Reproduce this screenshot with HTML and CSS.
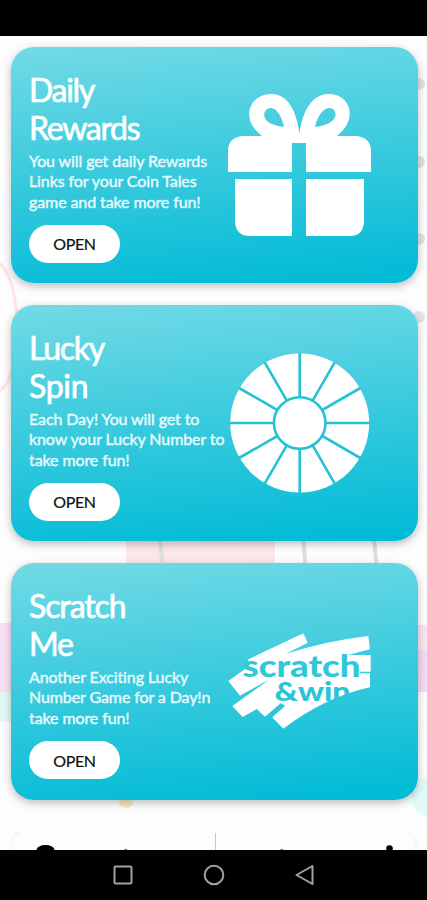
FILE: index.html
```html
<!DOCTYPE html>
<html lang="en">
<head>
<meta charset="utf-8">
<title>Coin Tales Rewards</title>
<link rel="stylesheet" href="styles.css">
</head>
<body>
<div class="status"></div>
<main class="screen">
  <svg class="backdrop" viewBox="0 36 427 814" aria-hidden="true">
    <path d="M0 263C23 286 23 374 0 391" fill="none" stroke="#fde4e7" stroke-width="3"/>
    <g fill="#e2e2e3"><circle cx="419" cy="84" r="6"/><circle cx="419" cy="162" r="6"/><circle cx="419" cy="239" r="6"/><circle cx="419" cy="317" r="6"/></g>
    <path d="M126 538H275V570H126Z" fill="#fce6e9"/>
    <path d="M160 538L163 570M303 538L306 570M374 538L377 570" stroke="#dedede" stroke-width="4"/>
    <path d="M0 623H20V692H0Z" fill="#f8dff5"/><path d="M0 692H15V722H0Z" fill="#e0f8f3"/>
    <path d="M412 625H427V650H412Z" fill="#fbe5f2"/><path d="M412 650H427V692H412Z" fill="#f5d9f5"/>
    <circle cx="431" cy="797" r="20" fill="#e0fbf8"/><ellipse cx="126" cy="803" rx="7" ry="5" fill="#f8edbf"/>
  </svg>
  <section class="card">
    <div class="copy">
      <h2><span class="t-rewards">Daily</span><span class="t-rewards">Rewards</span></h2>
      <p><span>You will get daily Rewards</span><span>Links for your Coin Tales</span><span>game and take more fun!</span></p>
      <button>OPEN</button>
    </div>
    <svg class="art" viewBox="228 93 144 144">
      <g fill="#fff">
        <path fill-rule="evenodd" d="M262 136C239 119 250 94 271 94C289 94 297 113 299.500 134C302 113 311 94 329 94C350 94 359 119 337 136H357Q371 138 371 151V172H306V143H292V172H228V151Q228 138 242 136ZM284 127C282 117 277 108 271 108C264 108 262 116 267 121Q271 125 284 127ZM315 127C317 117 323 108 329 108C336 108 338 116 332 121Q328 125 315 127Z"/>
        <path d="M235 179H292V236H250Q236 236 235 222ZM306 179H364V222Q363 236 350 236H306Z"/>
      </g>
    </svg>
  </section>
  <section class="card">
    <div class="copy">
      <h2><span class="t-rewards">Lucky</span><span class="t-spin">Spin</span></h2>
      <p><span>Each Day! You will get to</span><span>know your Lucky Number to</span><span>take more fun!</span></p>
      <button>OPEN</button>
    </div>
    <svg class="art" viewBox="228 351 144 144">
      <circle cx="299.700" cy="423" r="69.500" fill="#fff"/>
      <g stroke="#23c3d5" stroke-width="2.600" transform="translate(299.700 423)">
        <path d="M0-70V70M-70 0H70M35-60.620L-35 60.620M60.620-35L-60.620 35M60.620 35L-60.620-35M35 60.620L-35-60.620"/>
        <circle r="25.800" fill="#fff"/>
      </g>
    </svg>
  </section>
  <section class="card">
    <div class="copy">
      <h2><span class="t-scratch">Scratch</span><span class="t-rewards">Me</span></h2>
      <p><span>Another Exciting Lucky</span><span>Number Game for a Day!n</span><span>take more fun!</span></p>
      <button>OPEN</button>
    </div>
    <svg class="art" viewBox="228 609 144 144">
      <path fill="#fff" d="M248.300 659.300L303.300 633.300L307.700 642.700L285.700 654Q325 641 368.300 636L370 649.300L348 655H370.700V671.700H360V673.300H370V687.300Q325 697 283.300 728.700L272.300 717.300L285 706L281 703L265 716.700L256.700 709L242.700 717L232.300 706L270 679L240 695.700L228.300 681L248 667Z"/>
      <text class="logo" x="242.500" y="677" textLength="118" lengthAdjust="spacingAndGlyphs">scratch</text>
      <text class="logo small" x="274.500" y="701" textLength="76" lengthAdjust="spacingAndGlyphs">&amp;win</text>
    </svg>
  </section>
  <svg class="peek" viewBox="0 822 427 28" aria-hidden="true">
    <path d="M12 850V840Q13 834 20 833M416 850V840Q415 834 408 833" fill="none" stroke="#f0f0f0"/>
    <path d="M215.500 833V850" stroke="#c9c9c9"/>
    <ellipse cx="45.500" cy="850" rx="9" ry="5"/><circle cx="389.500" cy="848.500" r="3.300"/>
    <path d="M124 850L126 848.500L127 850M280 850L282 848.500L283 850" fill="#555"/>
  </svg>
</main>
<nav class="navbar">
  <svg viewBox="0 850 427 50" fill="none" stroke="#a2a2a2" stroke-width="2">
    <rect x="114.500" y="866.500" width="17" height="17" rx="1"/>
    <circle cx="214" cy="875" r="9.300"/>
    <path d="M312.500 866V884L296.500 875Z" stroke-linejoin="round"/>
  </svg>
</nav>
</body>
</html>
```
FILE: styles.css
```css
* { box-sizing: border-box; }
body { margin: 0; height: 900px; display: flex; flex-direction: column; overflow: hidden; background: #fff; font-family: Lato, sans-serif; }
.status { height: 36px; flex: none; background: #000; }
.screen { position: relative; height: 814px; flex: none; display: flex; flex-direction: column; gap: 22px; padding: 11px 9.5px 0 10.5px; overflow: hidden; background: #fdfdfd; }
.backdrop { position: absolute; inset: 0; width: 427px; height: 814px; }
.card { position: relative; flex: none; height: 236.200px; padding: 23px 45px 0 18.5px; display: flex; border-radius: 23px; background: linear-gradient(175deg, #6fd9e5 3%, #02bbd6 96%); box-shadow: 0 3px 8px rgba(0, 0, 0, .26); }
.copy { width: 198.500px; flex: none; color: #fff; }
h2 { margin: 0; padding-top: 1px; font-size: 32px; line-height: 37.500px; font-weight: 400; -webkit-text-stroke: .7px #fff; }
p { margin: 4.500px 0 12.500px; font-size: 16px; line-height: 20.500px; letter-spacing: -.1px; color: #e9fbfd; -webkit-text-stroke: .4px #e9fbfd; }
h2 span, p span { display: block; width: max-content; white-space: nowrap; }
button { display: block; width: 91px; height: 38.500px; padding: 0; border: 0; border-radius: 20px; background: #fff; color: #111; font: 400 16px Lato, sans-serif; letter-spacing: -.4px; -webkit-text-stroke: .2px #111; }
.art { width: 144px; height: 144px; margin-top: 23px; flex: none; }
.logo { font: 900 31px Lato, sans-serif; fill: #30c7d9; }
.logo.small { font-size: 27px; fill: #28c5d8; }
.peek { display: block; position: relative; width: 427px; height: 28px; flex: none; margin-left: -10.500px; }
.navbar { height: 50px; flex: none; background: #000; }
.navbar svg { display: block; width: 427px; height: 50px; }
.t-rewards { letter-spacing: -1.300px; }
.t-spin { letter-spacing: -.300px; }
.t-scratch { letter-spacing: -1.100px; }
```
